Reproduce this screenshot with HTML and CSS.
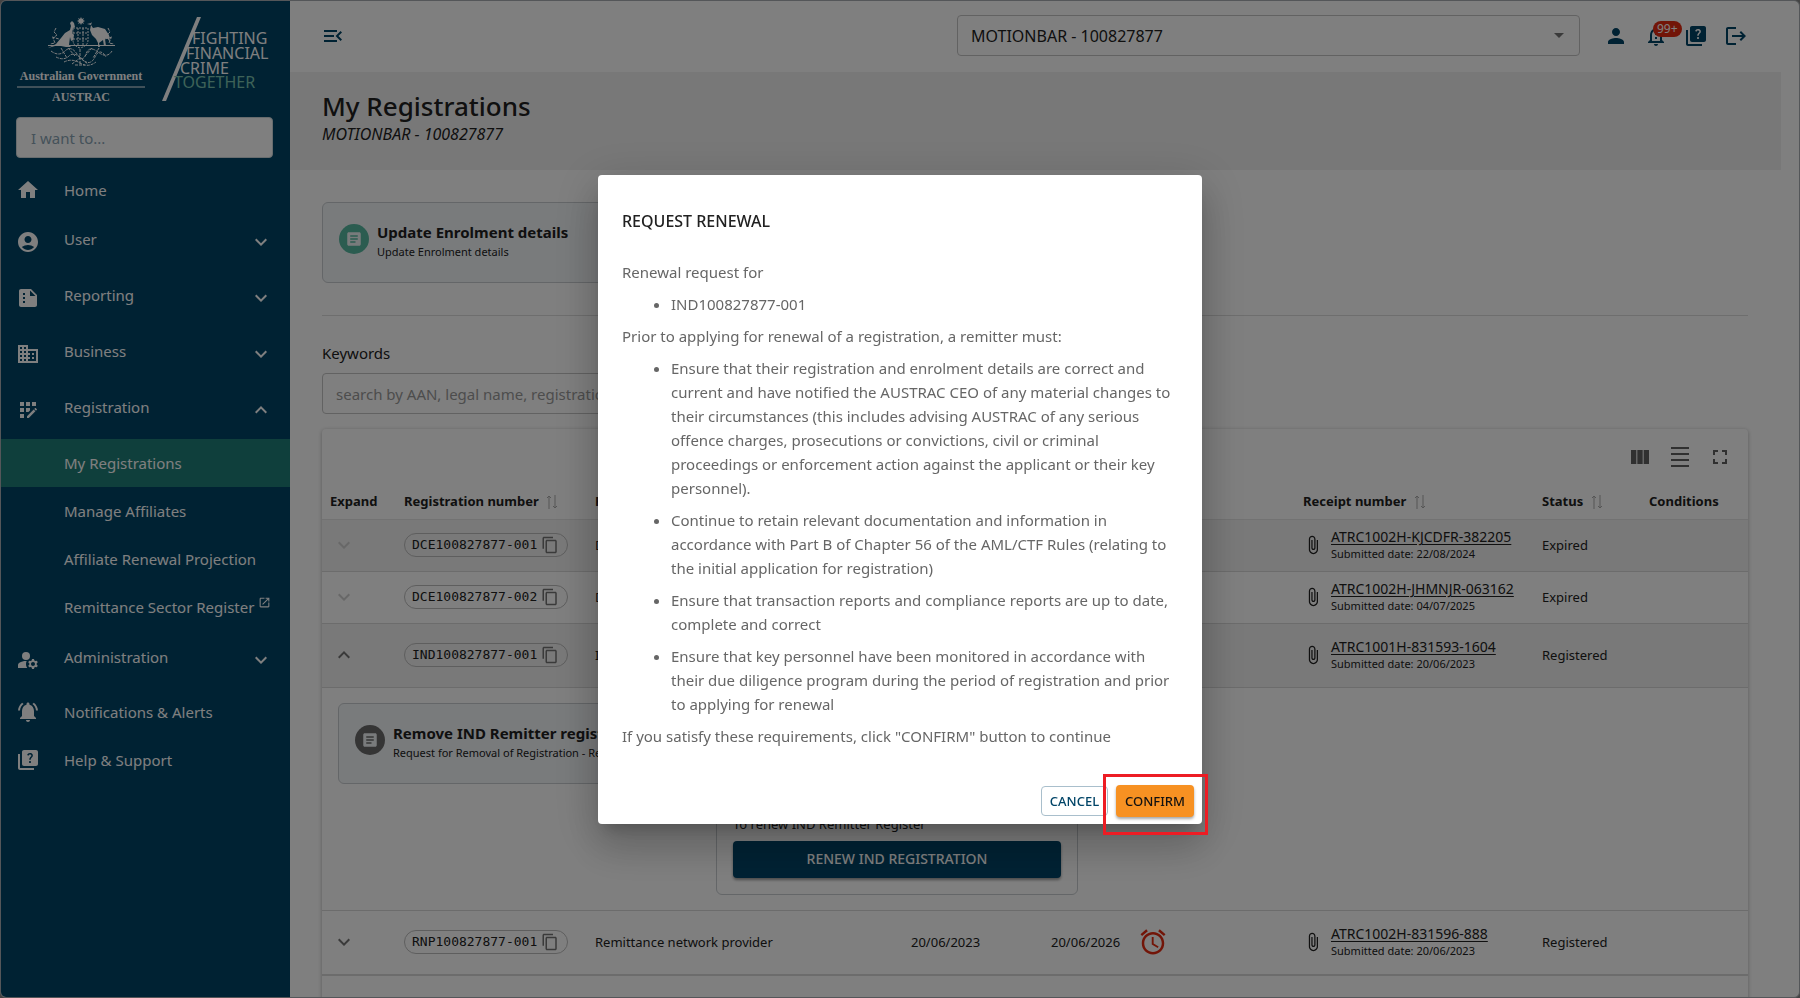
FILE: index.html
```html
<!DOCTYPE html>
<html lang="en">
<head>
<meta charset="utf-8">
<title>My Registrations</title>
<link rel="stylesheet" href="styles.css">
</head>
<body>
<svg class="sprite" aria-hidden="true">
  <symbol id="home" viewBox="0 0 24 24"><path d="M10 20v-6h4v6h5v-8h3L12 3 2 12h3v8z"/></symbol>
  <symbol id="account" viewBox="0 0 24 24"><path d="M12 2C6.48 2 2 6.48 2 12s4.48 10 10 10 10-4.48 10-10S17.52 2 12 2zm0 4c1.93 0 3.5 1.57 3.5 3.5S13.93 13 12 13s-3.5-1.57-3.5-3.5S10.07 6 12 6zm0 14c-2.03 0-4.43-.82-6.14-2.88C7.55 15.8 9.68 15 12 15s4.45.8 6.14 2.12C16.43 19.18 14.03 20 12 20z"/></symbol>
  <symbol id="summary" viewBox="0 0 24 24"><path d="M15 3H5c-1.1 0-2 .9-2 2v14c0 1.1.9 2 2 2h14c1.1 0 2-.9 2-2V9l-6-6zM9 17H7v-2h2v2zm0-4H7v-2h2v2zm0-4H7V7h2v2zm5 1V4.500l5.500 5.500H14z"/></symbol>
  <symbol id="domain" viewBox="0 0 24 24"><path d="M12 7V3H2v18h20V7H12zM6 19H4v-2h2v2zm0-4H4v-2h2v2zm0-4H4V9h2v2zm0-4H4V5h2v2zm4 12H8v-2h2v2zm0-4H8v-2h2v2zm0-4H8V9h2v2zm0-4H8V5h2v2zm10 12h-8v-2h2v-2h-2v-2h2v-2h-2V9h8v10zm-2-8h-2v2h2v-2zm0 4h-2v2h2v-2z"/></symbol>
  <symbol id="register" viewBox="0 0 24 24"><path d="M10 4h4v4h-4zM4 16h4v4H4zM4 10h4v4H4zM4 4h4v4H4zM14 12.420V10h-4v4h2.420zM20.880 11.290l-1.170-1.170c-.16-.16-.42-.16-.58 0l-.88.88L20 12.750l.88-.88c.16-.16.16-.42 0-.58zM11 18.250V20h1.750l6.670-6.670-1.750-1.750zM16 4h4v4h-4z"/></symbol>
  <symbol id="manage" viewBox="0 0 24 24"><circle cx="10" cy="8" r="4"/><path d="M10.670 13.020C10.450 13.010 10.230 13 10 13c-2.420 0-4.680.67-6.610 1.820-.88.52-1.390 1.500-1.390 2.530V20h9.260c-.79-1.130-1.260-2.510-1.260-4 0-1.070.25-2.070.67-2.980zM20.750 16c0-.22-.03-.42-.06-.63l1.140-1.010-1-1.730-1.450.49c-.32-.27-.68-.48-1.080-.63L18 11h-2l-.3 1.490c-.4.15-.76.36-1.080.63l-1.450-.49-1 1.730 1.140 1.010c-.03.21-.06.41-.06.63s.03.42.06.63l-1.140 1.010 1 1.730 1.450-.49c.32.27.68.48 1.080.63L16 21h2l.3-1.490c.4-.15.76-.36 1.080-.63l1.450.49 1-1.730-1.140-1.010c.03-.21.06-.41.06-.63zM17 18c-1.100 0-2-.9-2-2s.9-2 2-2 2 .9 2 2-.9 2-2 2z"/></symbol>
  <symbol id="alerts" viewBox="0 0 24 24"><path d="M7.580 4.080 6.150 2.650C3.750 4.480 2.170 7.300 2.030 10.500h2c.15-2.650 1.510-4.970 3.550-6.420zm12.390 6.420h2c-.15-3.200-1.730-6.020-4.120-7.850l-1.420 1.430c2.020 1.450 3.390 3.770 3.540 6.420zM18 11c0-3.070-1.640-5.640-4.500-6.320V4c0-.83-.67-1.500-1.500-1.500s-1.500.67-1.500 1.500v.68C7.630 5.360 6 7.920 6 11v5l-2 2v1h16v-1l-2-2v-5zm-6 11c1.100 0 2-.9 2-2h-4c0 1.100.9 2 2 2z"/></symbol>
  <symbol id="quiz" viewBox="0 0 24 24"><path d="M4 6H2v14c0 1.100.9 2 2 2h14v-2H4V6zM20 2H8c-1.100 0-2 .9-2 2v12c0 1.100.9 2 2 2h12c1.100 0 2-.9 2-2V4c0-1.100-.9-2-2-2zm-5.990 13c-.59 0-1.050-.47-1.050-1.050 0-.59.47-1.040 1.050-1.040.59 0 1.040.45 1.040 1.040-.01.58-.45 1.050-1.040 1.050zm2.500-6.170c-.63.93-1.230 1.210-1.560 1.810-.13.24-.18.4-.18 1.180h-1.520c0-.41-.06-1.080.26-1.650.41-.73 1.180-1.160 1.630-1.800.48-.68.21-1.940-1.140-1.940-.88 0-1.320.67-1.500 1.230l-1.370-.57C11.510 5.960 12.520 5 13.990 5c1.230 0 2.080.56 2.510 1.260.37.61.58 1.730.01 2.570z"/></symbol>
  <symbol id="person" viewBox="0 0 24 24"><path d="M12 12c2.210 0 4-1.790 4-4s-1.790-4-4-4-4 1.790-4 4 1.790 4 4 4zm0 2c-2.670 0-8 1.340-8 4v2h16v-2c0-2.660-5.330-4-8-4z"/></symbol>
  <symbol id="bell" viewBox="0 0 24 24"><path d="M12 22c1.100 0 2-.9 2-2h-4c0 1.100.89 2 2 2zm6-6v-5c0-3.070-1.640-5.640-4.500-6.320V4c0-.83-.67-1.500-1.500-1.500s-1.500.67-1.500 1.500v.68C7.630 5.360 6 7.920 6 11v5l-2 2v1h16v-1l-2-2zm-2 1H8v-6c0-2.480 1.510-4.500 4-4.500s4 2.020 4 4.500v6zM11 9h2v2h-2zM11 13h2v2h-2z"/></symbol>
  <symbol id="logout" viewBox="0 0 24 24"><path d="M17 7l-1.410 1.410L18.170 11H8v2h10.170l-2.580 2.580L17 17l5-5zM4 5h8V3H4c-1.100 0-2 .9-2 2v14c0 1.100.9 2 2 2h8v-2H4V5z"/></symbol>
  <symbol id="menu-open" viewBox="0 0 24 24"><path d="M3 18h13v-2H3v2zm0-5h10v-2H3v2zm0-7v2h13V6H3zm18 9.590L17.420 12 21 8.410 19.590 7l-5 5 5 5L21 15.590z"/></symbol>
  <symbol id="article" viewBox="0 0 24 24"><path d="M19 3H5c-1.100 0-2 .9-2 2v14c0 1.100.9 2 2 2h14c1.100 0 2-.9 2-2V5c0-1.100-.9-2-2-2zm-5 14H7v-2h7v2zm3-4H7v-2h10v2zm0-4H7V7h10v2z"/></symbol>
  <symbol id="down" viewBox="0 0 24 24"><path d="M16.590 8.590L12 13.170 7.410 8.590 6 10l6 6 6-6z"/></symbol>
  <symbol id="up" viewBox="0 0 24 24"><path d="M12 8l-6 6 1.410 1.410L12 10.830l4.590 4.580L18 14z"/></symbol>
  <symbol id="columns" viewBox="0 0 24 24"><path d="M14.670 5v14H9.330V5h5.340zm1 14H21V5h-5.330v14zm-7.340 0V5H3v14h5.330z"/></symbol>
  <symbol id="density" viewBox="0 0 24 24"><path d="M3 2h18v2H3zM3 8h18v2H3zM3 14h18v2H3zM3 20h18v2H3z"/></symbol>
  <symbol id="fullscreen" viewBox="0 0 24 24"><path d="M7 14H5v5h5v-2H7v-3zm-2-4h2V7h3V5H5v5zm12 7h-3v2h5v-5h-2v3zM14 5v2h3v3h2V5h-5z"/></symbol>
  <symbol id="copy" viewBox="0 0 24 24"><path d="M16 1H4c-1.100 0-2 .9-2 2v14h2V3h12V1zm3 4H8c-1.100 0-2 .9-2 2v14c0 1.100.9 2 2 2h11c1.100 0 2-.9 2-2V7c0-1.100-.9-2-2-2zm0 16H8V7h11v14z"/></symbol>
  <symbol id="clip" viewBox="0 0 24 24"><path d="M16.500 6v11.500c0 2.210-1.790 4-4 4s-4-1.790-4-4V5c0-1.380 1.120-2.500 2.500-2.500s2.500 1.120 2.500 2.500v10.500c0 .55-.45 1-1 1s-1-.45-1-1V6H10v9.500c0 1.380 1.120 2.500 2.500 2.500s2.500-1.120 2.500-2.500V5c0-2.210-1.790-4-4-4S7 2.790 7 5v12.500c0 3.040 2.460 5.500 5.500 5.500s5.500-2.460 5.500-5.500V6h-1.500z"/></symbol>
  <symbol id="alarm" viewBox="0 0 24 24"><path d="M22 5.720l-4.600-3.860-1.290 1.530 4.600 3.860L22 5.720zM7.880 3.390L6.600 1.860 2 5.710l1.290 1.530 4.590-3.850zM12.500 8H11v6l4.750 2.850.75-1.230-4-2.370V8zM12 4c-4.970 0-9 4.030-9 9s4.020 9 9 9c4.970 0 9-4.030 9-9s-4.030-9-9-9zm0 16c-3.870 0-7-3.130-7-7s3.130-7 7-7 7 3.130 7 7-3.130 7-7 7z"/></symbol>
  <symbol id="external" viewBox="0 0 24 24"><path d="M19 19H5V5h7V3H5c-1.110 0-2 .9-2 2v14c0 1.100.89 2 2 2h14c1.100 0 2-.9 2-2v-7h-2v7zM14 3v2h3.590l-9.830 9.830 1.410 1.410L19 6.410V10h2V3h-7z"/></symbol>
  <symbol id="sort" viewBox="0 0 12 16"><path d="M3 15V2M1 4l2-2 2 2M9 1v13M7 12l2 2 2-2" fill="none" stroke="currentColor"/></symbol>
</svg>

<div class="app">
  <aside class="sidebar">
    <svg class="brand" viewBox="0 0 256 90" role="img" aria-label="AUSTRAC">
      <g fill="#fff">
        <path d="M65 0l1 2 2-1-1 2 2 1-2 1 1 2-2-1-1 2-1-2-2 1 1-2-2-1 2-1-1-2 2 1z"/>
        <path d="M56 4l2 2 1 4-2 1-1 5 2 2-1 5-2 1-1-4-1 8 2 2h-5l-5-1-6 0-7 2 8-4 5-6 4-5 5-3 1-4-1-3z"/>
        <path d="M75 6l-4 1 4 1-1 5 2 5 4 4 2 4v4h2l-1-4 4-3 1 6h2l-1-7 2-1 3 4-1-7-4-6-7-2-5 1-2-3 1-3z"/>
        <path d="M32 28h67v1H32z"/>
      </g>
      <g fill="none" stroke="#fff">
        <path d="M57 11h15v12q0 6-8 8-7-2-7-8zM57 16h15M57 22h15M62 11v18M67 11v18" stroke-dasharray="2 1"/>
        <path d="M40 11l-2 4 3 3-4 3 2 5-5 1M92 11l2 4-3 3 4 3-2 5 5 1M36 20l7 2M96 20l-7 2" stroke-dasharray="3 1"/>
        <path d="M35 34q8 6 14 0t12 3 9 0 12-2 14-1M40 40q8 4 13-1t13 3 13-2 11 0M48 45q8-4 16 1t16-1M56 47l8-6 8 6M45 31l6 10M83 31l-6 10M52 31l7 8M76 31l-7 8M59 48h10M64 32v16" stroke-dasharray="3 1"/>
      </g>
      <g class="crest-text" fill="#fff" text-anchor="middle">
        <text x="65" y="63">Australian Government</text>
        <text x="65" y="84">AUSTRAC</text>
      </g>
      <path d="M1 70h128" stroke="#fff"/>
      <path d="M181 0h4l-35 84h-4z" fill="#fff"/>
      <g class="slogan" fill="#fff">
        <text x="176" y="27">FIGHTING</text>
        <text x="170" y="42">FINANCIAL</text>
        <text x="164" y="57">CRIME</text>
        <text x="158" y="71" fill="#7cc4b0">TOGETHER</text>
      </g>
    </svg>
    <input class="want" type="text" placeholder="I want to..." aria-label="I want to">
    <nav class="nav">
      <a class="item" href="#"><svg><use href="#home"/></svg><span>Home</span></a>
      <button class="item group"><svg><use href="#account"/></svg><span>User</span><svg class="chev"><use href="#down"/></svg></button>
      <button class="item group"><svg><use href="#summary"/></svg><span>Reporting</span><svg class="chev"><use href="#down"/></svg></button>
      <button class="item group"><svg><use href="#domain"/></svg><span>Business</span><svg class="chev"><use href="#down"/></svg></button>
      <button class="item group"><svg><use href="#register"/></svg><span>Registration</span><svg class="chev"><use href="#up"/></svg></button>
      <div class="sub">
        <a class="item active" href="#"><span>My Registrations</span></a>
        <a class="item" href="#"><span>Manage Affiliates</span></a>
        <a class="item" href="#"><span>Affiliate Renewal Projection</span></a>
        <a class="item" href="#"><span>Remittance Sector Register</span><svg class="ext"><use href="#external"/></svg></a>
      </div>
      <button class="item group"><svg><use href="#manage"/></svg><span>Administration</span><svg class="chev"><use href="#down"/></svg></button>
      <a class="item" href="#"><svg><use href="#alerts"/></svg><span>Notifications &amp; Alerts</span></a>
      <a class="item" href="#"><svg><use href="#quiz"/></svg><span>Help &amp; Support</span></a>
    </nav>
  </aside>

  <div class="page">
    <header class="topbar">
      <button class="icon-btn" aria-label="Collapse menu"><svg><use href="#menu-open"/></svg></button>
      <div class="entity">
        <select aria-label="Entity"><option>MOTIONBAR - 100827877</option></select>
        <svg class="caret" viewBox="0 0 10 5"><path d="M0 0h10L5 5z"/></svg>
      </div>
      <div class="actions">
        <button class="icon-btn" aria-label="Profile"><svg><use href="#person"/></svg></button>
        <button class="icon-btn" aria-label="Notifications"><svg><use href="#bell"/></svg><span class="badge">99+</span></button>
        <button class="icon-btn" aria-label="Help"><svg><use href="#quiz"/></svg></button>
        <button class="icon-btn" aria-label="Log out"><svg><use href="#logout"/></svg></button>
      </div>
    </header>
    <div class="band">
      <h1>My Registrations</h1>
      <p>MOTIONBAR - 100827877</p>
    </div>
    <main class="content">
      <a class="card" href="#">
        <span class="disc teal"><svg><use href="#article"/></svg></span>
        <span class="card-text"><strong>Update Enrolment details</strong><small>Update Enrolment details</small></span>
      </a>
      <hr>
      <label class="label" for="kw">Keywords</label>
      <input class="search" id="kw" type="text" placeholder="search by AAN, legal name, registration">
      <section class="panel">
        <div class="tools">
          <button class="icon-btn" aria-label="Columns"><svg><use href="#columns"/></svg></button>
          <button class="icon-btn" aria-label="Density"><svg><use href="#density"/></svg></button>
          <button class="icon-btn" aria-label="Full screen"><svg><use href="#fullscreen"/></svg></button>
        </div>
        <table>
          <colgroup><col class="c-expand"><col class="c-number"><col><col class="c-start"><col class="c-end"><col class="c-receipt"><col class="c-status"><col class="c-cond"></colgroup>
          <thead>
            <tr><th>Expand</th><th>Registration number <svg><use href="#sort"/></svg></th><th>Registration</th><th></th><th></th><th>Receipt number <svg><use href="#sort"/></svg></th><th>Status <svg><use href="#sort"/></svg></th><th>Conditions</th></tr>
          </thead>
          <tbody>
            <tr class="shade">
              <td><svg class="toggle off"><use href="#down"/></svg></td>
              <td><span class="chip">DCE100827877-001<svg><use href="#copy"/></svg></span></td>
              <td>Digital currency exchange</td><td></td><td></td>
              <td><div class="receipt"><svg><use href="#clip"/></svg><div><a href="#">ATRC1002H-KJCDFR-382205</a><small>Submitted date: 22/08/2024</small></div></div></td>
              <td>Expired</td><td></td>
            </tr>
            <tr>
              <td><svg class="toggle off"><use href="#down"/></svg></td>
              <td><span class="chip">DCE100827877-002<svg><use href="#copy"/></svg></span></td>
              <td>Digital currency exchange</td><td></td><td></td>
              <td><div class="receipt"><svg><use href="#clip"/></svg><div><a href="#">ATRC1002H-JHMNJR-063162</a><small>Submitted date: 04/07/2025</small></div></div></td>
              <td>Expired</td><td></td>
            </tr>
            <tr class="shade tall">
              <td><svg class="toggle"><use href="#up"/></svg></td>
              <td><span class="chip">IND100827877-001<svg><use href="#copy"/></svg></span></td>
              <td>Independent remittance dealer</td><td></td><td></td>
              <td><div class="receipt"><svg><use href="#clip"/></svg><div><a href="#">ATRC1001H-831593-1604</a><small>Submitted date: 20/06/2023</small></div></div></td>
              <td>Registered</td><td></td>
            </tr>
            <tr>
              <td colspan="8" class="detail">
                <div class="detail-cards">
                  <a class="card" href="#">
                    <span class="disc"><svg><use href="#article"/></svg></span>
                    <span class="card-text"><strong>Remove IND Remitter registration</strong><small>Request for Removal of Registration - Remitter</small></span>
                  </a>
                  <div class="renew">
                    <p>To renew IND Remitter Register</p>
                    <button>RENEW IND REGISTRATION</button>
                  </div>
                </div>
              </td>
            </tr>
            <tr class="tall">
              <td><svg class="toggle"><use href="#down"/></svg></td>
              <td><span class="chip">RNP100827877-001<svg><use href="#copy"/></svg></span></td>
              <td>Remittance network provider</td><td>20/06/2023</td>
              <td><div class="due">20/06/2026<svg><use href="#alarm"/></svg></div></td>
              <td><div class="receipt"><svg><use href="#clip"/></svg><div><a href="#">ATRC1002H-831596-888</a><small>Submitted date: 20/06/2023</small></div></div></td>
              <td>Registered</td><td></td>
            </tr>
          </tbody>
        </table>
        <div class="pager"></div>
      </section>
    </main>
  </div>
</div>

<div class="backdrop">
  <div class="dialog" role="dialog" aria-labelledby="dlg-title">
    <h2 id="dlg-title">REQUEST RENEWAL</h2>
    <div class="dialog-body">
      <p>Renewal request for</p>
      <ul><li>IND100827877-001</li></ul>
      <p>Prior to applying for renewal of a registration, a remitter must:</p>
      <ul>
        <li>Ensure that their registration and enrolment details are correct and current and have notified the AUSTRAC CEO of any material changes to their circumstances (this includes advising AUSTRAC of any serious offence charges, prosecutions or convictions, civil or criminal proceedings or enforcement action against the applicant or their key personnel).</li>
        <li>Continue to retain relevant documentation and information in accordance with Part B of Chapter 56 of the AML/CTF Rules (relating to the initial application for registration)</li>
        <li>Ensure that transaction reports and compliance reports are up to date, complete and correct</li>
        <li>Ensure that key personnel have been monitored in accordance with their due diligence program during the period of registration and prior to applying for renewal</li>
      </ul>
      <p>If you satisfy these requirements, click "CONFIRM" button to continue</p>
    </div>
    <div class="dialog-actions">
      <button class="cancel">CANCEL</button>
      <div class="marked"><button class="confirm">CONFIRM</button></div>
    </div>
  </div>
</div>
</body>
</html>
```
FILE: styles.css
```css
* { box-sizing: border-box; }
body {
  margin: 0;
  height: 100vh;
  overflow: hidden;
  background: #888;
  color: #212121;
  font: 15px/20px "Noto Sans", "Open Sans", sans-serif;
}
button, input, select { font: inherit; color: inherit; }
button { border: 0; background: none; padding: 0; cursor: pointer; }
a { color: inherit; }
h1, h2, p, ul { margin: 0; }
svg { width: 24px; height: 24px; fill: currentColor; flex: none; }
.sprite { display: none; }

.app {
  display: flex;
  height: 100vh;
  overflow: hidden;
  border: 1px solid #a8adb2;
  border-radius: 6px;
  background: #fff;
}

/* Sidebar */
.sidebar {
  width: 289px;
  flex: none;
  background: #004467;
  color: #fff;
}
.brand { display: block; width: 256px; height: 90px; margin: 16px 0 10px 15px; }
.crest-text { font: bold 12px "Liberation Serif", serif; }
.slogan { font: 16px "Noto Sans", sans-serif; }
.want {
  display: block;
  width: 257px;
  height: 41px;
  margin: 0 15px;
  padding: 1px 14px 0;
  border: 1px solid #cfd8dc;
  border-radius: 4px;
  background: #fff;
}
.want::placeholder { color: #8aa4b4; opacity: 1; }
.nav { margin-top: 8px; }
.item {
  display: flex;
  align-items: center;
  width: 100%;
  height: 48px;
  padding: 0 17px 0 15px;
  color: #fff;
  text-align: left;
  text-decoration: none;
}
.item span { margin-left: 24px; }
.item.group { height: 56px; }
.group span { padding-bottom: 7px; }
.chev { margin-left: auto; }
.sub { padding: 1px 0; }
.sub .item { padding-left: 39px; }
.sub .active { background: #1f7f78; }
.item .ext { width: 13px; height: 13px; margin: 0 0 10px 4px; }

/* Top bar */
.page { flex: 1; min-width: 0; }
.topbar {
  display: flex;
  align-items: center;
  height: 71px;
  padding: 0 51px 2px 31px;
  color: #004467;
}
.icon-btn { position: relative; display: flex; }
.entity { position: relative; width: 623px; margin-left: auto; }
.entity select {
  display: block;
  width: 100%;
  height: 41px;
  padding: 0 13px;
  border: 1px solid #c4c4c4;
  border-radius: 4px;
  background: #fff;
  color: #212121;
  font-size: 16px;
  appearance: none;
}
.caret {
  position: absolute;
  right: 16px;
  top: 18px;
  width: 10px;
  height: 5px;
  color: #757575;
}
.actions { display: flex; gap: 16px; margin-left: 24px; }
.badge {
  position: absolute;
  left: 9px;
  top: -3px;
  padding: 0 4px;
  border-radius: 8px;
  background: #e52a10;
  color: #fff;
  font-size: 12px;
  line-height: 16px;
}
.band {
  height: 98px;
  margin-right: 18px;
  padding: 16px 32px;
  background: #f1f1f1;
}
.band h1 { font-size: 26px; line-height: 36px; font-weight: 500; }
.band p { font-style: italic; font-size: 16px; line-height: 20px; }

/* Content */
.content { padding: 32px 51px 0 32px; }
.card {
  display: flex;
  width: 362px;
  height: 81px;
  padding: 19px 16px;
  gap: 8px;
  border: 1px solid #c8ccd0;
  border-radius: 6px;
  background: #f3f6f9;
  text-decoration: none;
  white-space: nowrap;
  overflow: hidden;
}
.disc {
  display: grid;
  place-items: center;
  flex: none;
  width: 30px;
  height: 30px;
  margin-top: 2px;
  border-radius: 50%;
  background: #6b6b6b;
  color: #f3f6f9;
}
.disc.teal { background: #57b8a0; }
.disc svg { width: 18px; height: 18px; }
.card-text { display: grid; align-content: start; }
.card-text strong { font-size: 15px; line-height: 20px; }
.card-text small { font-size: 11px; line-height: 20px; }
hr { height: 1px; margin: 32px 0 27px; border: 0; background: #dcdcdc; }
.label { display: block; }
.search {
  display: block;
  width: 560px;
  height: 41px;
  margin: 10px 0 15px;
  padding: 0 13px;
  border: 1px solid #c4c4c4;
  border-radius: 4px;
  background: #fff;
}
.search::placeholder { color: #9a9a9a; opacity: 1; }
.panel { border-radius: 4px; box-shadow: 0 1px 4px rgba(0, 0, 0, .3); }
.tools {
  display: flex;
  justify-content: flex-end;
  gap: 16px;
  padding: 16px 16px 14px;
  color: #616161;
}
table {
  width: 100%;
  table-layout: fixed;
  border-collapse: collapse;
  font-size: 13px;
}
.c-expand { width: 74px; }
.c-number { width: 191px; }
.c-start { width: 140px; }
.c-end { width: 252px; }
.c-receipt { width: 239px; }
.c-status { width: 107px; }
.c-cond { width: 107px; }
th, td { padding: 0 8px; text-align: left; white-space: nowrap; }
th { height: 36px; }
th svg { width: 12px; height: 16px; margin-left: 4px; color: #aaa; vertical-align: middle; }
td { height: 52px; border-bottom: 1px solid #d8d8d8; }
thead th { border-bottom: 1px solid #e4e4e4; }
.shade td { background: #f2f2f2; }
.tall td { height: 64px; }
.toggle { display: block; width: 24px; height: 24px; margin-left: 2px; color: #757575; }
.toggle.off { color: #d0d0d0; }
.chip {
  display: inline-flex;
  align-items: center;
  gap: 4px;
  height: 24px;
  padding: 0 8px 0 7px;
  border: 1px solid #bdbdbd;
  border-radius: 12px;
  font: 13px/20px "DejaVu Sans Mono", monospace;
}
.chip svg { width: 18px; height: 18px; color: #757575; }
.receipt { display: flex; align-items: center; gap: 8px; }
.receipt svg { width: 20px; height: 20px; }
.receipt a { display: block; font-size: 14px; line-height: 17px; text-underline-offset: 2px; }
.receipt small { display: block; font-size: 11px; line-height: 17px; }
.due { display: flex; align-items: center; gap: 18px; }
.due svg { width: 30px; height: 30px; color: #e52a10; }
td.detail { padding: 15px 16px; }
.detail-cards { display: flex; gap: 16px; align-items: flex-start; }
.renew {
  display: flex;
  flex-direction: column;
  justify-content: flex-end;
  gap: 7px;
  width: 362px;
  height: 192px;
  padding: 16px;
  border: 1px solid #c8ccd0;
  border-radius: 6px;
}
.renew button {
  height: 37px;
  border-radius: 4px;
  background: #004467;
  box-shadow: 0 2px 3px rgba(0, 0, 0, .4);
  color: #fff;
  font-size: 14px;
  font-weight: 500;
}
.pager { height: 64px; border-top: 1px solid #d8d8d8; }

/* Dialog */
.backdrop {
  position: fixed;
  inset: 0;
  display: flex;
  align-items: center;
  justify-content: center;
  background: rgba(0, 0, 0, .5);
}
.dialog {
  width: 604px;
  border-radius: 4px;
  background: #fff;
  box-shadow: 0 11px 15px -7px rgba(0, 0, 0, .2), 0 24px 38px 3px rgba(0, 0, 0, .14), 0 9px 46px 8px rgba(0, 0, 0, .12);
}
.dialog h2 { padding: 34px 24px 0; font-size: 16px; line-height: 24px; font-weight: 500; }
.dialog-body { padding: 27px 24px 0; color: #666; line-height: 24px; }
.dialog-body p, .dialog-body li { margin-bottom: 8px; }
.dialog-body ul { padding-left: 49px; }
.dialog-actions {
  display: flex;
  align-items: center;
  justify-content: flex-end;
  gap: 8px;
  padding: 29px 8px 7px;
  font-size: 13px;
  font-weight: 500;
}
.cancel {
  height: 30px;
  padding: 0 8px;
  border: 1px solid #a9bfcc;
  border-radius: 4px;
  color: #004467;
}
.marked { position: relative; }
.marked::after {
  content: "";
  position: absolute;
  inset: -11px -14px -18px -13px;
  border: 3px solid #ed1c24;
  pointer-events: none;
}
.confirm {
  display: block;
  height: 32px;
  padding: 0 9px;
  border-radius: 4px;
  background: #f79122;
  box-shadow: 0 2px 3px rgba(0, 0, 0, .35);
  color: #111;
}
```
